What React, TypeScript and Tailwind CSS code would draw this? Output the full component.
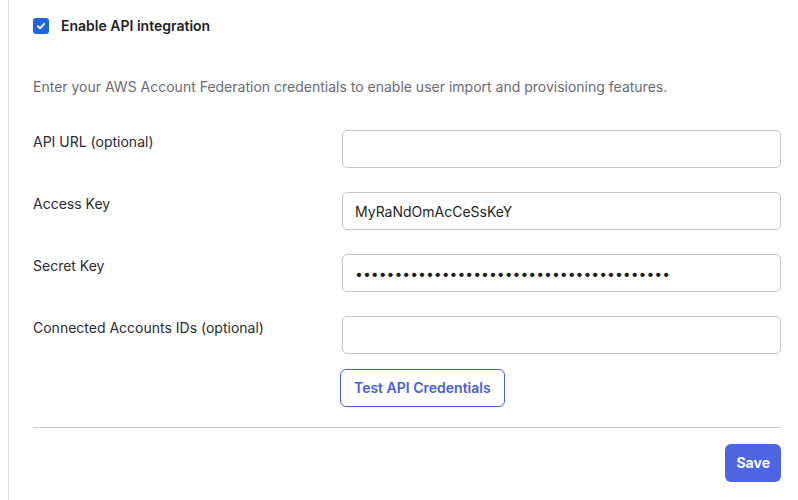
import React, { useState } from 'react';

const fields = [
  { label: 'API URL (optional)', value: '', type: 'text' },
  { label: 'Access Key', value: 'MyRaNdOmAcCeSsKeY', type: 'text' },
  { label: 'Secret Key', value: 'abcdefghijklmnopqrstuvwxyz0123456789abcd', type: 'password' },
  { label: 'Connected Accounts IDs (optional)', value: '', type: 'text' },
];

export default function App() {
  const [enabled, setEnabled] = useState(true);

  return (
    <div className="min-h-[500px] w-[798px] bg-white pl-2" style={{ fontFamily: 'Inter, "Noto Sans", sans-serif' }}>
      <div className="min-h-[500px] border-l border-[#e3e3e6] pl-6 pr-[17px] pt-4">
        {/* Enable toggle */}
        <label className="flex items-center gap-3 cursor-pointer">
          <span
            onClick={() => setEnabled(!enabled)}
            className={`flex h-4 w-4 items-center justify-center rounded-[3px] ${enabled ? 'bg-[#2166e0]' : 'border border-gray-400 bg-white'}`}
          >
            {enabled && (
              <svg width="10" height="10" viewBox="0 0 10 10" fill="none">
                <path d="M1.8 5.2 4 7.3 8.2 2.8" stroke="white" strokeWidth="1.8" strokeLinecap="round" strokeLinejoin="round" />
              </svg>
            )}
          </span>
          <span className="text-sm font-semibold text-[#1f1f23]">Enable API integration</span>
        </label>

        <p className="mt-[41px] text-sm text-[#6b6b73]">
          Enter your AWS Account Federation credentials to enable user import and provisioning features.
        </p>

        {/* Credential fields */}
        <div className="mt-[33px] flex flex-col gap-6">
          {fields.map((f) => (
            <div key={f.label} className="flex">
              <div className="w-[309px] pt-[2px] text-sm text-[#2b2b30]">{f.label}</div>
              <input
                type={f.type}
                defaultValue={f.value}
                className="h-[38px] flex-1 rounded-[5px] border border-[#c6c6cc] px-3 text-sm text-[#1f1f23] outline-none"
              />
            </div>
          ))}
        </div>

        <div className="mt-[15px] pl-[307px]">
          <button className="h-[38px] rounded-[6px] border border-[#4a63e0] px-[13px] text-sm font-semibold text-[#4a5ed8]">
            Test API Credentials
          </button>
        </div>

        <div className="mt-5 border-t border-[#c9c9ce]" />

        <div className="mt-4 flex justify-end">
          <button className="h-[38px] rounded-[6px] bg-[#4c66e2] px-[11px] text-sm font-bold text-white">
            Save
          </button>
        </div>
      </div>
    </div>
  );
}
